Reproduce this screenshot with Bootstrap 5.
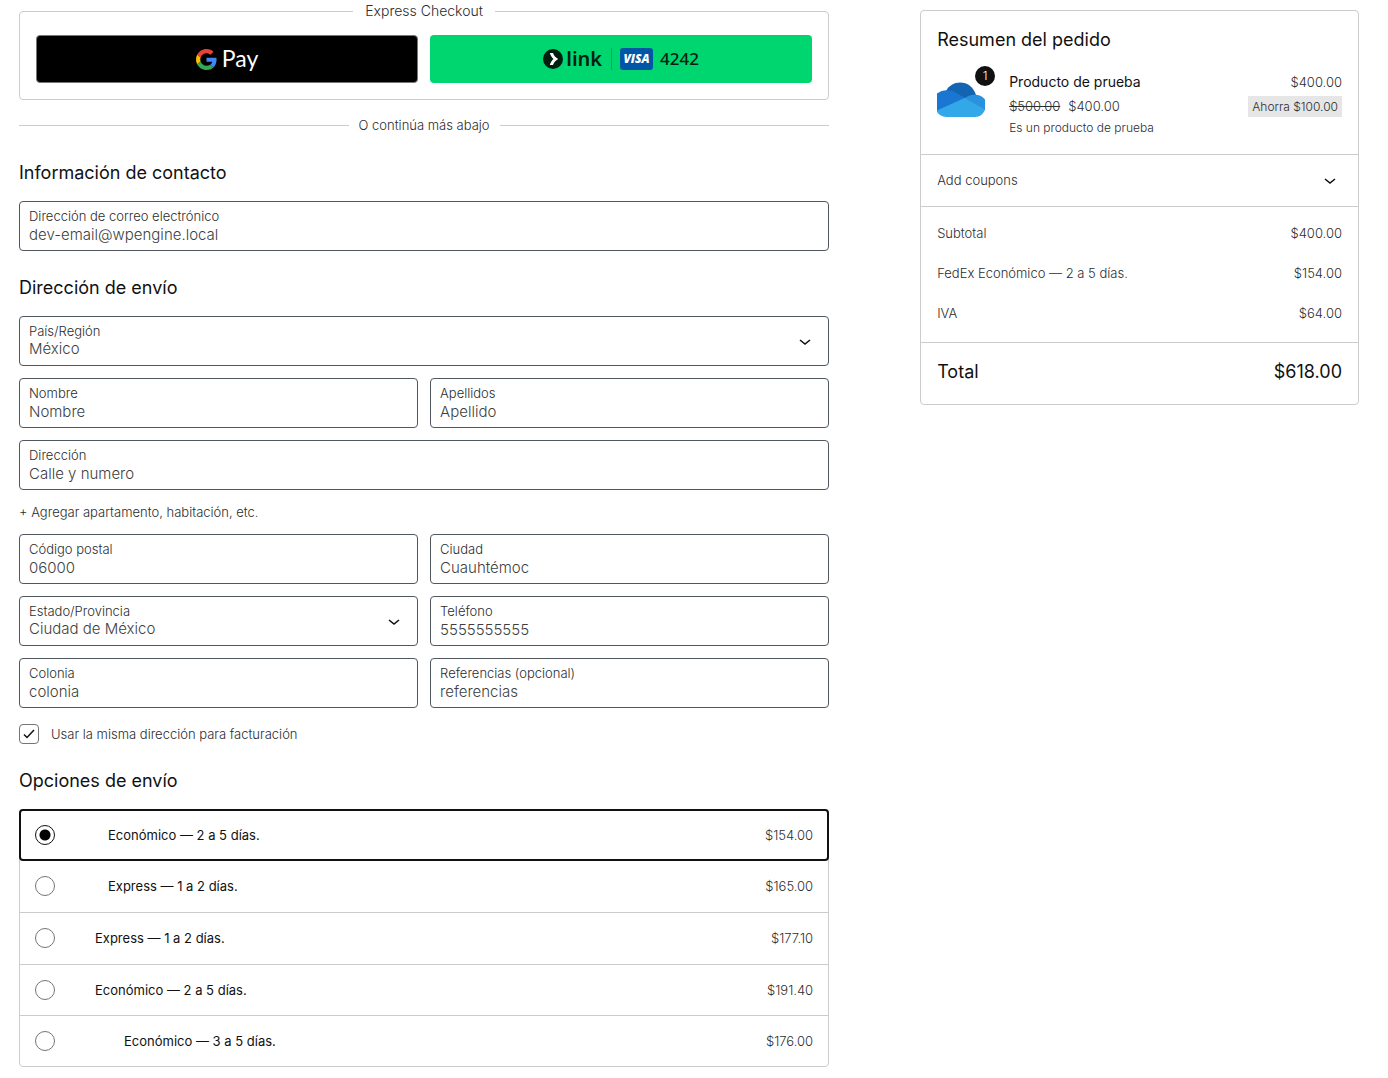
<!DOCTYPE html>
<html lang="es">
<head>
<meta charset="utf-8">
<meta name="viewport" content="width=device-width, initial-scale=1">
<title>Finalizar compra</title>
<link href="https://cdn.jsdelivr.net/npm/bootstrap@5.3.0/dist/css/bootstrap.min.css" rel="stylesheet">
<style>
  body { font-family: Inter, "Liberation Sans", sans-serif; font-size: 13px; font-weight: 300; line-height: 22px; color: #2b2d2f; background: #fff; }
  .checkout { gap: 91px; padding: 0 29px 11px 19px; }
  .checkout-main { flex: 24 1 0; min-width: 0; }
  .checkout-side { flex: 13 1 0; min-width: 0; padding-top: 10px; }
  h2 { font-size: 18px; font-weight: 400; line-height: 25px; color: #111; margin: 0; }
  .section-title { margin: 24px 0 16px; }

  .express { border: 1px solid #ccc; border-radius: 4px; padding: 13px 16px 16px; }
  .express legend { float: none; width: auto; margin: 0 auto; padding: 0 12px; font-size: 14px; line-height: 22px; font-weight: 300; }
  .pay-grid, .fields { display: grid; grid-template-columns: 1fr 1fr; gap: 12px; }
  .wide { grid-column: 1 / -1; }
  .pay-btn { height: 48px; border-radius: 4px; padding: 0; display: flex; align-items: center; justify-content: center; }
  .pay-google { background: #000; border: 1px solid #747775; color: #fff; gap: 5px; font: 400 23px/24px Lato, sans-serif; }
  .pay-google span { padding-bottom: 2px; }
  .pay-link { background: #00d66f; border: 0; color: #011e0f; }
  .link-word { font: 600 20px/24px "Noto Sans", sans-serif; margin-left: 3px; }
  .link-rule { width: 1px; height: 22px; background: #00ac5b; margin: 0 8px 0 9px; }
  .visa { width: 33px; height: 22px; border-radius: 3px; background: #0055a5; color: #fff; font: italic 800 12px/22px "Open Sans", sans-serif; }
  .last4 { font: 500 17px/24px "Noto Sans", sans-serif; margin-left: 7px; }

  .or-line { gap: 10px; margin-top: 14px; }
  .or-line::before, .or-line::after { content: ""; flex: 1; height: 1px; background: #ccc; }

  .field { position: relative; border: 1px solid #50575e; border-radius: 4px; height: 50px; padding: 6px 9px; }
  .field label { display: block; font-size: 13px; line-height: 17px; }
  .field input, .field select { display: block; width: 100%; height: 20px; border: 0; padding: 0; background: transparent; appearance: none; outline: 0; font-size: 15px; font-weight: 300; line-height: 20px; color: #3c3f42; }
  .field select { height: 18px; line-height: 18px; }
  .field svg { position: absolute; right: 17px; top: 19px; pointer-events: none; }
  .plain-link { color: #2b2d2f; text-decoration: none; line-height: 20px; }

  .tick, .dial { appearance: none; width: 20px; height: 20px; margin: 0; flex: none; border: 1px solid #757575; background: #fff; }
  .tick { border-radius: 4px; }
  .tick-mark { position: absolute; left: 4px; top: 4px; pointer-events: none; }
  .dial { border-radius: 50%; }
  .dial:checked { border-color: #111; background: radial-gradient(circle, #000 5px, transparent 6px); }
  .same-address { margin-top: 16px; gap: 12px; line-height: 20px; }

  .rates { border: 1px solid #ccc; border-radius: 4px; }
  .rate { position: relative; height: 52px; padding: 0 15px 1px; border-bottom: 1px solid #ccc; }
  .rate:nth-child(4) { height: 51px; }
  .rate:first-child { height: 51px; border-bottom: 0; }
  .rate:last-child { height: 50px; border-bottom: 0; }
  .rate.chosen::before { content: ""; position: absolute; inset: -1px -1px 0; border: 2px solid #111; border-radius: 4px; pointer-events: none; }
  .rate-name { font-weight: 400; color: #111; margin-left: 40px; }
  .indent-1 { margin-left: 53px; }
  .indent-2 { margin-left: 69px; }

  .summary { border: 1px solid #ccc; border-radius: 4px; }
  .summary > * + * { border-top: 1px solid #ccc; }
  .order { padding: 16px; }
  .item { margin-top: 18px; line-height: 24px; }
  .thumb { position: relative; width: 48px; height: 48px; margin: 6px 24px 0 0; flex: none; }
  .qty { position: absolute; right: -10px; top: -10px; width: 20px; height: 20px; border-radius: 50%; background: #111; color: #fff; font-size: 12px; line-height: 20px; text-align: center; }
  .item-name { font-size: 14px; font-weight: 400; color: #111; }
  .item-note { font-size: 12px; line-height: 20px; }
  .save { background: #e6e6e6; font-size: 12px; line-height: 21px; padding: 0 4px; margin-top: 2px; }
  .coupons { width: 100%; background: none; border: 0; padding: 14px 20px 14px 16px; line-height: 23px; color: inherit; font-weight: 300; text-align: left; }
  .totals { padding: 6px 16px 9px; line-height: 40px; }
  .grand { padding: 16px 16px 20px; }
  @media (max-width: 800px) { .checkout { flex-direction: column; gap: 24px; } }
</style>
<script src="https://cdn.jsdelivr.net/npm/bootstrap@5.3.0/dist/js/bootstrap.bundle.min.js"></script>
</head>
<body>
<div class="checkout d-flex">
  <main class="checkout-main">
    <form>
      <fieldset class="express">
        <legend>Express Checkout</legend>
        <div class="pay-grid">
          <button type="button" class="pay-btn pay-google">
            <svg width="21" height="21" viewBox="0 0 48 48" aria-hidden="true"><path fill="#EA4335" d="M24 9.5c3.54 0 6.71 1.22 9.21 3.6l6.85-6.85C35.9 2.38 30.47 0 24 0 14.62 0 6.51 5.38 2.56 13.22l7.98 6.19C12.43 13.72 17.74 9.5 24 9.5z"/><path fill="#4285F4" d="M46.98 24.55c0-1.57-.15-3.09-.38-4.55H24v9.02h12.94c-.58 2.96-2.26 5.48-4.78 7.18l7.73 6c4.51-4.18 7.09-10.36 7.09-17.65z"/><path fill="#FBBC05" d="M10.53 28.59c-.48-1.45-.76-2.99-.76-4.59s.27-3.14.76-4.59l-7.98-6.19C.92 16.46 0 20.12 0 24c0 3.88.92 7.54 2.56 10.78l7.97-6.19z"/><path fill="#34A853" d="M24 48c6.48 0 11.93-2.13 15.89-5.81l-7.73-6c-2.15 1.45-4.92 2.3-8.16 2.3-6.26 0-11.57-4.22-13.47-9.91l-7.98 6.19C6.51 42.62 14.62 48 24 48z"/></svg>
            <span>Pay</span>
          </button>
          <button type="button" class="pay-btn pay-link">
            <svg width="20" height="20" viewBox="0 0 20 20" aria-hidden="true"><circle cx="10" cy="10" r="10" fill="#011e0f"/><path fill="#fff" d="M6.800 4h3.200c.8 2.500 2.700 4.700 5.200 6-2.500 1.300-4.400 3.500-5.200 6H6.800c.7-2.400 1.900-4.400 3.700-6C8.700 8.400 7.500 6.400 6.800 4z"/></svg>
            <span class="link-word">link</span>
            <span class="link-rule"></span>
            <span class="visa">VISA</span>
            <span class="last4">4242</span>
          </button>
        </div>
      </fieldset>
      <div class="or-line d-flex align-items-center">O continúa más abajo</div>

      <h2 class="section-title">Información de contacto</h2>
      <div class="field"><label for="email">Dirección de correo electrónico</label><input id="email" type="email" value="dev-email@wpengine.local"></div>

      <h2 class="section-title">Dirección de envío</h2>
      <div class="fields">
        <div class="field wide"><label for="country">País/Región</label><select id="country"><option>México</option></select>
          <svg width="12" height="12" viewBox="0 0 12 12" fill="none" stroke="#111" stroke-width="1.600"><path d="M1 4l5 4 5-4"/></svg></div>
        <div class="field"><label for="first">Nombre</label><input id="first" type="text" value="Nombre"></div>
        <div class="field"><label for="last">Apellidos</label><input id="last" type="text" value="Apellido"></div>
        <div class="field wide"><label for="street">Dirección</label><input id="street" type="text" value="Calle y numero"></div>
        <a class="plain-link wide" href="#">+ Agregar apartamento, habitación, etc.</a>
        <div class="field"><label for="zip">Código postal</label><input id="zip" type="text" value="06000"></div>
        <div class="field"><label for="city">Ciudad</label><input id="city" type="text" value="Cuauhtémoc"></div>
        <div class="field"><label for="state">Estado/Provincia</label><select id="state"><option>Ciudad de México</option></select>
          <svg width="12" height="12" viewBox="0 0 12 12" fill="none" stroke="#111" stroke-width="1.600"><path d="M1 4l5 4 5-4"/></svg></div>
        <div class="field"><label for="phone">Teléfono</label><input id="phone" type="tel" value="5555555555"></div>
        <div class="field"><label for="colony">Colonia</label><input id="colony" type="text" value="colonia"></div>
        <div class="field"><label for="refs">Referencias (opcional)</label><input id="refs" type="text" value="referencias"></div>
      </div>
      <div class="same-address d-flex align-items-center position-relative">
        <input class="tick" type="checkbox" id="same" checked>
        <svg class="tick-mark" width="12" height="12" viewBox="0 0 12 12" fill="none" stroke="#111" stroke-width="1.500"><path d="M1 6.500l3 3L11 2"/></svg>
        <label for="same">Usar la misma dirección para facturación</label>
      </div>

      <h2 class="section-title">Opciones de envío</h2>
      <div class="rates">
        <div class="rate chosen d-flex align-items-center"><input class="dial" type="radio" name="rate" id="r1" checked><label class="rate-name indent-1" for="r1">Económico — 2 a 5 días.</label><span class="ms-auto">$154.00</span></div>
        <div class="rate d-flex align-items-center"><input class="dial" type="radio" name="rate" id="r2"><label class="rate-name indent-1" for="r2">Express — 1 a 2 días.</label><span class="ms-auto">$165.00</span></div>
        <div class="rate d-flex align-items-center"><input class="dial" type="radio" name="rate" id="r3"><label class="rate-name" for="r3">Express — 1 a 2 días.</label><span class="ms-auto">$177.10</span></div>
        <div class="rate d-flex align-items-center"><input class="dial" type="radio" name="rate" id="r4"><label class="rate-name" for="r4">Económico — 2 a 5 días.</label><span class="ms-auto">$191.40</span></div>
        <div class="rate d-flex align-items-center"><input class="dial" type="radio" name="rate" id="r5"><label class="rate-name indent-2" for="r5">Económico — 3 a 5 días.</label><span class="ms-auto">$176.00</span></div>
      </div>
    </form>
  </main>

  <aside class="checkout-side">
    <div class="summary">
      <div class="order">
        <h2>Resumen del pedido</h2>
        <div class="item d-flex">
          <div class="thumb">
            <svg width="48" height="48" viewBox="0 0 48 48" aria-hidden="true">
              <path fill="#1464b4" d="M9 15C12 9.500 17 6.500 23 6.500c7.500 0 13.500 4.500 16 12.500l-12 8z"/>
              <path fill="#1976d2" d="M0 17.500C5 13.500 13 13 18.500 16.500L29 22.500l-12 7L0 36z"/>
              <path fill="#2892df" d="M27 22.500c3.500-3 7.500-4.200 12-3.800 4 .3 7 2 9 4.800V34l-6 2z"/>
              <path fill="#32a8e8" d="M0 34.500L27.500 22 48 33.500C46.500 38 43 41 38 41H9.500C5 41 2 38.800 0 36z"/>
            </svg>
            <span class="qty">1</span>
          </div>
          <div class="flex-grow-1">
            <div class="item-name">Producto de prueba</div>
            <div class="d-flex gap-2"><del>$500.00</del><span>$400.00</span></div>
            <div class="item-note">Es un producto de prueba</div>
          </div>
          <div class="d-flex flex-column align-items-end">
            <span>$400.00</span>
            <span class="save">Ahorra $100.00</span>
          </div>
        </div>
      </div>
      <div>
        <button type="button" class="coupons d-flex align-items-center justify-content-between">Add coupons
          <svg width="16" height="12" viewBox="0 0 16 12" fill="none" stroke="#111" stroke-width="1.600"><path d="M3 4l5 4 5-4"/></svg></button>
      </div>
      <div class="totals">
        <div class="d-flex justify-content-between"><span>Subtotal</span><span>$400.00</span></div>
        <div class="d-flex justify-content-between"><span>FedEx Económico — 2 a 5 días.</span><span>$154.00</span></div>
        <div class="d-flex justify-content-between"><span>IVA</span><span>$64.00</span></div>
      </div>
      <h2 class="grand d-flex justify-content-between"><span>Total</span><span>$618.00</span></h2>
    </div>
  </aside>
</div>
</body>
</html>
